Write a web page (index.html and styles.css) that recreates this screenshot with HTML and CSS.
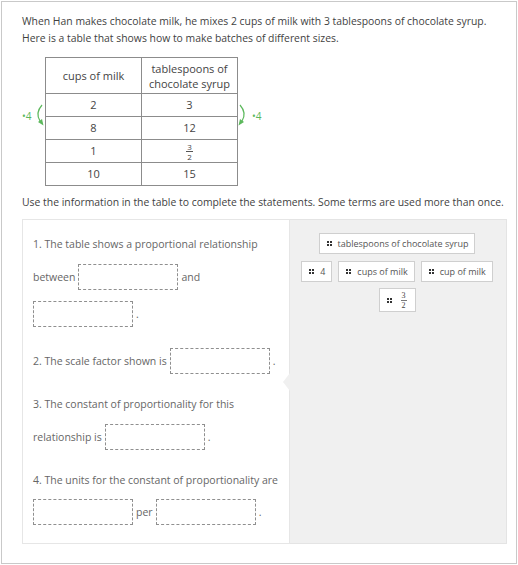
FILE: index.html
```html
<!DOCTYPE html>
<html>
<head>
<meta charset="utf-8">
<link rel="stylesheet" href="styles.css">
</head>
<body>
<div class="card">
  <p class="intro">When Han makes chocolate milk, he mixes 2 cups of milk with 3 tablespoons of chocolate syrup. Here is a table that shows how to make batches of different sizes.</p>
  <div class="table-wrap">
    <table class="ratio">
      <thead>
        <tr><th>cups of milk</th><th>tablespoons of<br>chocolate syrup</th></tr>
      </thead>
      <tbody>
        <tr><td>2</td><td>3</td></tr>
        <tr><td>8</td><td>12</td></tr>
        <tr><td>1</td><td><span class="frac"><span class="num">3</span><span class="den">2</span></span></td></tr>
        <tr><td>10</td><td>15</td></tr>
      </tbody>
    </table>
    <div class="anno anno-left">
      <span class="factor">•4</span>
      <svg class="arrow" width="13" height="24" viewBox="0 0 13 24"><path d="M9 2 Q2 10 7 18" fill="none" stroke="#5cb85c" stroke-width="1.2"/><polygon points="10.5,22.5 5,19 9,16" fill="#5cb85c"/></svg>
    </div>
    <div class="anno anno-right">
      <svg class="arrow" width="13" height="24" viewBox="0 0 13 24"><path d="M4 2 Q11 10 6 18" fill="none" stroke="#5cb85c" stroke-width="1.2"/><polygon points="2.5,22.5 8,19 4,16" fill="#5cb85c"/></svg>
      <span class="factor">•4</span>
    </div>
  </div>
  <p class="instr">Use the information in the table to complete the statements. Some terms are used more than once.</p>
  <div class="activity">
    <div class="statements">
      <div class="item">
        <div class="line">1. The table shows a proportional relationship</div>
        <div class="line boxline">between<span class="drop"></span>and</div>
        <div class="line boxline"><span class="drop lead"></span>.</div>
      </div>
      <div class="item">
        <div class="line boxline">2. The scale factor shown is<span class="drop"></span>.</div>
      </div>
      <div class="item">
        <div class="line">3. The constant of proportionality for this</div>
        <div class="line boxline">relationship is<span class="drop"></span>.</div>
      </div>
      <div class="item">
        <div class="line">4. The units for the constant of proportionality are</div>
        <div class="line boxline"><span class="drop lead"></span>per<span class="drop"></span>.</div>
      </div>
    </div>
    <div class="bank">
      <div class="chip-row">
        <span class="chip"><span class="grip"><i></i><i></i><i></i><i></i></span>tablespoons of chocolate syrup</span>
      </div>
      <div class="chip-row">
        <span class="chip"><span class="grip"><i></i><i></i><i></i><i></i></span>4</span>
        <span class="chip"><span class="grip"><i></i><i></i><i></i><i></i></span>cups of milk</span>
        <span class="chip"><span class="grip"><i></i><i></i><i></i><i></i></span>cup of milk</span>
      </div>
      <div class="chip-row">
        <span class="chip chip-frac"><span class="grip"><i></i><i></i><i></i><i></i></span><span class="frac mfrac"><span class="num">3</span><span class="den">2</span></span></span>
      </div>
    </div>
  </div>
</div>
</body>
</html>
```
FILE: styles.css
```css
body {
  margin: 0;
  font-family: "Open Sans", sans-serif;
  background: #fff;
}

.card {
  margin: 1px 0 0 1px;
  width: 516px;
  box-sizing: border-box;
  border: 1px solid #c9c9c9;
  padding: 11px 9px 19px 20px;
  color: #3f3f3f;
}

.intro {
  margin: 0;
  font-size: 10.4px;
  line-height: 17px;
}

.table-wrap {
  position: relative;
  margin-top: 10px;
  padding-left: 23px;
}

.ratio {
  border-collapse: collapse;
  width: 193px;
  font-size: 11px;
  color: #444;
  table-layout: fixed;
}

.ratio th,
.ratio td {
  border: 1px solid #8c8c8c;
  text-align: center;
  padding: 0;
  width: 50%;
}

.ratio th {
  font-weight: normal;
  height: 35px;
  line-height: 15px;
}

.ratio td {
  height: 22px;
  line-height: 14px;
}

.frac {
  display: inline-flex;
  flex-direction: column;
  align-items: center;
  vertical-align: middle;
  font-size: 8px;
  line-height: 9px;
}

.frac .den {
  border-top: 1px solid #555;
  padding: 0 1px;
}

.anno {
  position: absolute;
  top: 46px;
  display: flex;
  align-items: center;
  color: #5cb85c;
  font-size: 10px;
}

.anno-left {
  left: 0;
}

.anno-right {
  left: 214px;
}

.anno-left .arrow {
  margin-left: 2px;
}

.anno-right .factor {
  margin-left: 3px;
}

.factor {
  line-height: 12px;
  margin-top: 1px;
}

.instr {
  margin: 8px 0 8px;
  font-size: 10.4px;
  line-height: 17px;
  white-space: nowrap;
}

.activity {
  display: grid;
  grid-template-columns: 268px 217px;
}

.statements {
  border: 1px solid #e6e6e6;
  padding: 10px 9px 12px 10px;
  font-size: 10.5px;
  color: #666;
}

.item {
  margin-bottom: 10.5px;
}

.item:last-child {
  margin-bottom: 0;
}

.line {
  height: 28px;
  line-height: 28px;
  white-space: nowrap;
}

.boxline {
  height: 37px;
  display: flex;
  align-items: center;
}

.drop {
  display: inline-block;
  box-sizing: border-box;
  width: 100px;
  height: 26px;
  border: 1px dashed #8f8f8f;
  margin: 0 3px;
}

.drop.lead {
  margin-left: 0;
}

.bank {
  position: relative;
  background: #f0f0f0;
  border: 1px solid #e4e4e4;
  border-left: none;
  padding: 13px 0 0;
  display: flex;
  flex-direction: column;
  gap: 6.5px;
}

.bank::before {
  content: "";
  position: absolute;
  left: -7px;
  top: 153px;
  border-top: 9px solid transparent;
  border-bottom: 9px solid transparent;
  border-right: 7px solid #f0f0f0;
}

.chip-row {
  display: flex;
  justify-content: center;
  gap: 6px;
  padding-right: 2px;
}

.chip {
  display: inline-flex;
  align-items: center;
  box-sizing: border-box;
  height: 21px;
  background: #fff;
  border: 1px solid #cfcfcf;
  padding: 0 6px 0 7px;
  font-size: 9px;
  color: #555;
}

.chip-frac {
  height: 24px;
  padding-right: 8px;
}

.grip {
  display: grid;
  grid-template-columns: 2px 2px;
  gap: 1px;
  margin-right: 6px;
}

.grip i {
  display: block;
  width: 2px;
  height: 2px;
  background: #333;
}

.mfrac {
  font-family: "Liberation Serif", serif;
  font-size: 8px;
  color: #444;
  margin-left: 3px;
}

.mfrac .den {
  border-top-color: #777;
}
```
